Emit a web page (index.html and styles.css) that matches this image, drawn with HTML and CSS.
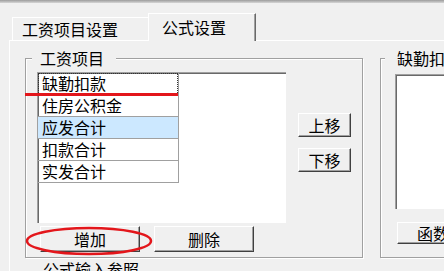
FILE: index.html
```html
<!DOCTYPE html>
<html lang="zh-CN">
<head>
<meta charset="utf-8">
<link rel="stylesheet" href="styles.css">
</head>
<body>
<div class="topbar"></div>
<div class="tabs">
  <div class="tab">工资项目设置</div>
  <div class="tab active">公式设置</div>
</div>
<div class="panel">
  <div class="groups">
    <div class="group g1">
      <div class="group-title">工资项目</div>
      <div class="g1-body">
        <div class="listbox">
          <ul class="items">
            <li class="item focus">缺勤扣款</li>
            <li class="item">住房公积金</li>
            <li class="item sel">应发合计</li>
            <li class="item">扣款合计</li>
            <li class="item">实发合计</li>
          </ul>
        </div>
        <div class="move-btns">
          <button class="btn move">上移</button>
          <button class="btn move">下移</button>
        </div>
      </div>
      <div class="btn-row">
        <button class="btn wide">增加</button>
        <button class="btn wide">删除</button>
      </div>
    </div>
    <div class="group g2">
      <div class="group-title">缺勤扣款</div>
      <div class="formula-box"></div>
      <button class="btn func">函数</button>
    </div>
  </div>
  <div class="group-title ref">公式输入参照</div>
</div>
<div class="mark-line"></div>
<svg class="mark-ellipse" viewBox="0 0 130 32" width="130" height="32">
  <ellipse cx="64" cy="16" rx="62" ry="13" fill="none" stroke="#e3161b" stroke-width="2.5"/>
</svg>
</body>
</html>
```

FILE: styles.css
```css
* { box-sizing: border-box; }
html, body { margin: 0; padding: 0; }
body {
  width: 444px;
  height: 271px;
  overflow: hidden;
  position: relative;
  background: #f0f0f0;
  color: #000;
  font-family: "Noto Sans CJK SC", "Noto Sans", sans-serif;
  font-size: 16px;
}
.topbar {
  height: 3px;
  background: linear-gradient(#9c9c9c, #d6d6d6);
}
.tabs {
  display: flex;
  align-items: flex-start;
  height: 28px;
  margin-top: 10px;
  padding-left: 12px;
}
.tab {
  width: 136px;
  height: 23px;
  margin-top: 4px;
  padding-left: 9px;
  line-height: 22px;
  border-top: 1px solid #fff;
  border-left: 1px solid #fff;
  white-space: nowrap;
}
.tab.active {
  position: relative;
  z-index: 1;
  width: 108px;
  height: 28px;
  margin-top: 0;
  padding-left: 13px;
  line-height: 27px;
  background: #f0f0f0;
  border-right: 1px solid #696969;
  box-shadow: inset -1px 0 #a0a0a0;
}
.panel {
  width: 700px;
  height: 300px;
  margin-top: -1px;
  margin-left: 9px;
  padding-top: 17px;
  padding-left: 15px;
  border-top: 1px solid #fff;
  border-left: 1px solid #fff;
}
.groups { display: flex; }
.group {
  border: 1px solid #a0a0a0;
  box-shadow: inset 1px 1px #fff, 1px 1px #fff;
}
.group-title {
  display: table;
  margin: -11px 0 0 6px;
  padding: 0 12px 0 8px;
  line-height: 20px;
  background: #f0f0f0;
  white-space: nowrap;
}
.g1 {
  width: 338px;
  padding-bottom: 5px;
}
.g1-body {
  display: flex;
  margin-top: 4px;
  padding-left: 11px;
}
.listbox {
  width: 249px;
  height: 151px;
  background: #fff;
  border-top: 1px solid #a0a0a0;
  border-left: 1px solid #a0a0a0;
  box-shadow: inset 1px 1px #696969;
}
.items {
  list-style: none;
  margin: 0;
  padding: 0;
  width: 141px;
  border-right: 1px solid #a0a0a0;
}
.item {
  height: 22px;
  padding-left: 4px;
  line-height: 21px;
  border-bottom: 1px solid #a0a0a0;
  white-space: nowrap;
}
.item.focus {
  outline: 1px dotted #333;
  outline-offset: -1px;
}
.item.sel { background: #cce8ff; }
.move-btns {
  display: flex;
  flex-direction: column;
  gap: 11px;
  margin-left: 12px;
  padding-top: 41px;
}
.btn {
  display: block;
  padding: 0;
  font: inherit;
  line-height: 20px;
  color: #000;
  background: #f0f0f0;
  border: 0;
  border-top: 1px solid #fff;
  border-left: 1px solid #fff;
  border-right: 1px solid #404040;
  border-bottom: 1px solid #404040;
  box-shadow: inset -1px -1px #a0a0a0;
}
.move { width: 53px; height: 24px; }
.btn-row {
  display: flex;
  gap: 14px;
  margin-top: 3px;
  padding-left: 14px;
}
.wide { width: 100px; height: 26px; }
.g2 {
  width: 200px;
  margin-left: 17px;
}
.g2 .group-title {
  margin-left: 4px;
  padding-left: 12px;
}
.formula-box {
  height: 135px;
  margin: 6px 0 0 14px;
  background: #fff;
  border-top: 1px solid #a0a0a0;
  border-left: 1px solid #a0a0a0;
  box-shadow: inset 1px 1px #696969;
}
.func {
  width: 80px;
  height: 22px;
  margin: 13px 0 0 16px;
  text-align: left;
  padding-left: 19px;
}
.group-title.ref {
  margin: 1px 0 0 10px;
  background: transparent;
}
.mark-line {
  position: absolute;
  left: 25px;
  top: 93px;
  width: 153px;
  height: 3px;
  background: #e3161b;
}
.mark-ellipse {
  position: absolute;
  left: 25px;
  top: 225px;
}
```
